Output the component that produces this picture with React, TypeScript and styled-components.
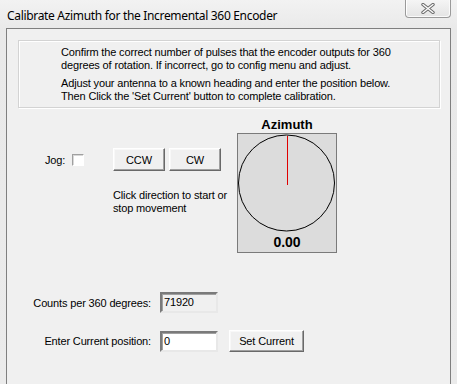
import React from 'react'
import styled, { createGlobalStyle } from 'styled-components'

const GlobalStyle = createGlobalStyle`
  html, body {
    margin: 0;
    padding: 0;
    background: #ececec;
    overflow: hidden;
  }
`

const Window = styled.div`
  width: 457px;
  height: 384px;
  display: flex;
  flex-direction: column;
  background: linear-gradient(#f2f2f2, #e9e9e9 30px, #ebebeb);
  overflow: hidden;
  font-family: 'Liberation Sans', Arial, sans-serif;
  font-size: 11px;
  letter-spacing: -0.15px;
  color: #000;
`

const TitleBar = styled.div`
  height: 28px;
  display: flex;
  align-items: flex-start;
  padding-left: 7px;
  flex-shrink: 0;
`

const Title = styled.div`
  font-family: 'Noto Sans', 'Open Sans', sans-serif;
  font-size: 12px;
  letter-spacing: -0.32px;
  margin-top: 7px;
  flex: 1;
`

const CloseButton = styled.div`
  width: 46px;
  height: 19px;
  margin-top: -1px;
  margin-right: 6px;
  box-sizing: border-box;
  border: 1px solid #9a9a9a;
  border-top: none;
  border-radius: 0 0 4px 4px;
  background: linear-gradient(#f6f6f6, #e4e4e4);
  box-shadow: inset 1px 0 #fff, inset -1px -1px #fafafa;
  display: flex;
  align-items: center;
  justify-content: center;
`

const Client = styled.div`
  flex: 1;
  margin: 0 6px 0 6px;
  border: 1px solid #7f7f7f;
  border-bottom: none;
  background: #f0f0f0;
  width: 445px;
  box-sizing: border-box;
`

const InfoBox = styled.div`
  margin: 11px 0 0 11px;
  width: 422px;
  height: 68px;
  box-sizing: border-box;
  border: 1px solid #d3d3d3;
  box-shadow: inset 1px 1px #fff, 1px 1px #fff;
  padding: 5px 0 0 42px;
`

const InfoText = styled.p`
  margin: 0 0 5px;
  line-height: 13px;
`

const MiddleRow = styled.div`
  display: flex;
  align-items: flex-start;
  margin-top: 9px;
`

const JogPane = styled.div`
  width: 230px;
  display: flex;
  align-items: flex-start;
  padding: 31px 0 0 38px;
  box-sizing: border-box;
`

const JogGroup = styled.div`
  width: 68px;
  height: 23px;
  display: flex;
  align-items: center;
  gap: 7px;
`

const Checkbox = styled.span`
  width: 12px;
  height: 12px;
  box-sizing: border-box;
  background: #fff;
  border: 1px solid;
  border-color: #a0a0a0 #fff #fff #a0a0a0;
  box-shadow: inset 1px 1px #d8d8d8;
  margin-top: 1px;
`

const ButtonColumn = styled.div`
  display: flex;
  flex-direction: column;
`

const ButtonRow = styled.div`
  display: flex;
  gap: 4px;
`

const Button = styled.button<{ w: number }>`
  width: ${({ w }) => w}px;
  height: 23px;
  padding: 0;
  font: inherit;
  letter-spacing: inherit;
  color: #000;
  background: #f0f0f0;
  border: 1px solid;
  border-color: #fff #696969 #696969 #fff;
  box-shadow: inset -1px -1px #a0a0a0, inset 1px 1px #f8f8f8;
  box-sizing: border-box;
`

const Hint = styled.div`
  margin-top: 18px;
  line-height: 13px;
  width: 120px;
`

const DialPane = styled.div`
  display: flex;
  flex-direction: column;
  align-items: center;
`

const DialTitle = styled.div`
  font-weight: bold;
  font-size: 13px;
  letter-spacing: 0;
  line-height: 16px;
  height: 16px;
`

const DialBox = styled.div`
  width: 100px;
  height: 120px;
  box-sizing: border-box;
  border: 1px solid #7a7a7a;
  background: #dcdcdc;
  display: flex;
  flex-direction: column;
  align-items: center;
`

const DialValue = styled.div`
  font-weight: bold;
  font-size: 14px;
  letter-spacing: 0;
  line-height: 16px;
  margin-top: 1px;
`

const Form = styled.div`
  display: grid;
  grid-template-columns: 144px 58px auto;
  column-gap: 9px;
  row-gap: 17px;
  align-items: center;
  margin-top: 39px;
`

const FieldLabel = styled.div`
  text-align: right;
`

const TextBox = styled.div<{ readOnly?: boolean }>`
  height: 21px;
  box-sizing: border-box;
  background: ${({ readOnly }) => (readOnly ? '#f0f0f0' : '#fff')};
  border: 2px solid;
  border-color: #7a7a7a #e8e8e8 #e8e8e8 #7a7a7a;
  box-shadow: inset 1px 1px #a0a0a0;
  padding: 1px 0 0 2px;
  line-height: 14px;
`

const SetButton = styled(Button)`
  margin-left: 2px;
  height: 22px;
`

const Dial = () => (
  <svg width="98" height="99" viewBox="0 0 98 99">
    <circle cx="48.5" cy="49" r="48" fill="none" stroke="#000" strokeWidth="1" />
    <rect x="49" y="2" width="1" height="49" fill="#e00000" />
  </svg>
)

const CloseGlyph = () => (
  <svg width="14" height="11" viewBox="0 0 14 11">
    <path d="M2 1.5 L12 9.5 M12 1.5 L2 9.5" stroke="#6a6a6a" strokeWidth="3.4" strokeLinecap="round" />
    <path d="M2 1.5 L12 9.5 M12 1.5 L2 9.5" stroke="#fdfdfd" strokeWidth="1.4" strokeLinecap="round" />
  </svg>
)

const App = () => (
  <>
    <GlobalStyle />
    <Window>
      <TitleBar>
        <Title>Calibrate Azimuth for the Incremental 360 Encoder</Title>
        <CloseButton>
          <CloseGlyph />
        </CloseButton>
      </TitleBar>
      <Client>
        <InfoBox>
          <InfoText>
            Confirm the correct number of pulses that the encoder outputs for 360
            <br />
            degrees of rotation. If incorrect, go to config menu and adjust.
          </InfoText>
          <InfoText>
            Adjust your antenna to a known heading and enter the position below.
            <br />
            Then Click the 'Set Current' button to complete calibration.
          </InfoText>
        </InfoBox>
        <MiddleRow>
          <JogPane>
            <JogGroup>
              <span>Jog:</span>
              <Checkbox />
            </JogGroup>
            <ButtonColumn>
              <ButtonRow>
                <Button w={52}>CCW</Button>
                <Button w={52}>CW</Button>
              </ButtonRow>
              <Hint>Click direction to start or stop movement</Hint>
            </ButtonColumn>
          </JogPane>
          <DialPane>
            <DialTitle>Azimuth</DialTitle>
            <DialBox>
              <Dial />
              <DialValue>0.00</DialValue>
            </DialBox>
          </DialPane>
        </MiddleRow>
        <Form>
          <FieldLabel>Counts per 360 degrees:</FieldLabel>
          <TextBox readOnly>71920</TextBox>
          <span />
          <FieldLabel>Enter Current position:</FieldLabel>
          <TextBox>0</TextBox>
          <SetButton w={75}>Set Current</SetButton>
        </Form>
      </Client>
    </Window>
  </>
)

export default App
